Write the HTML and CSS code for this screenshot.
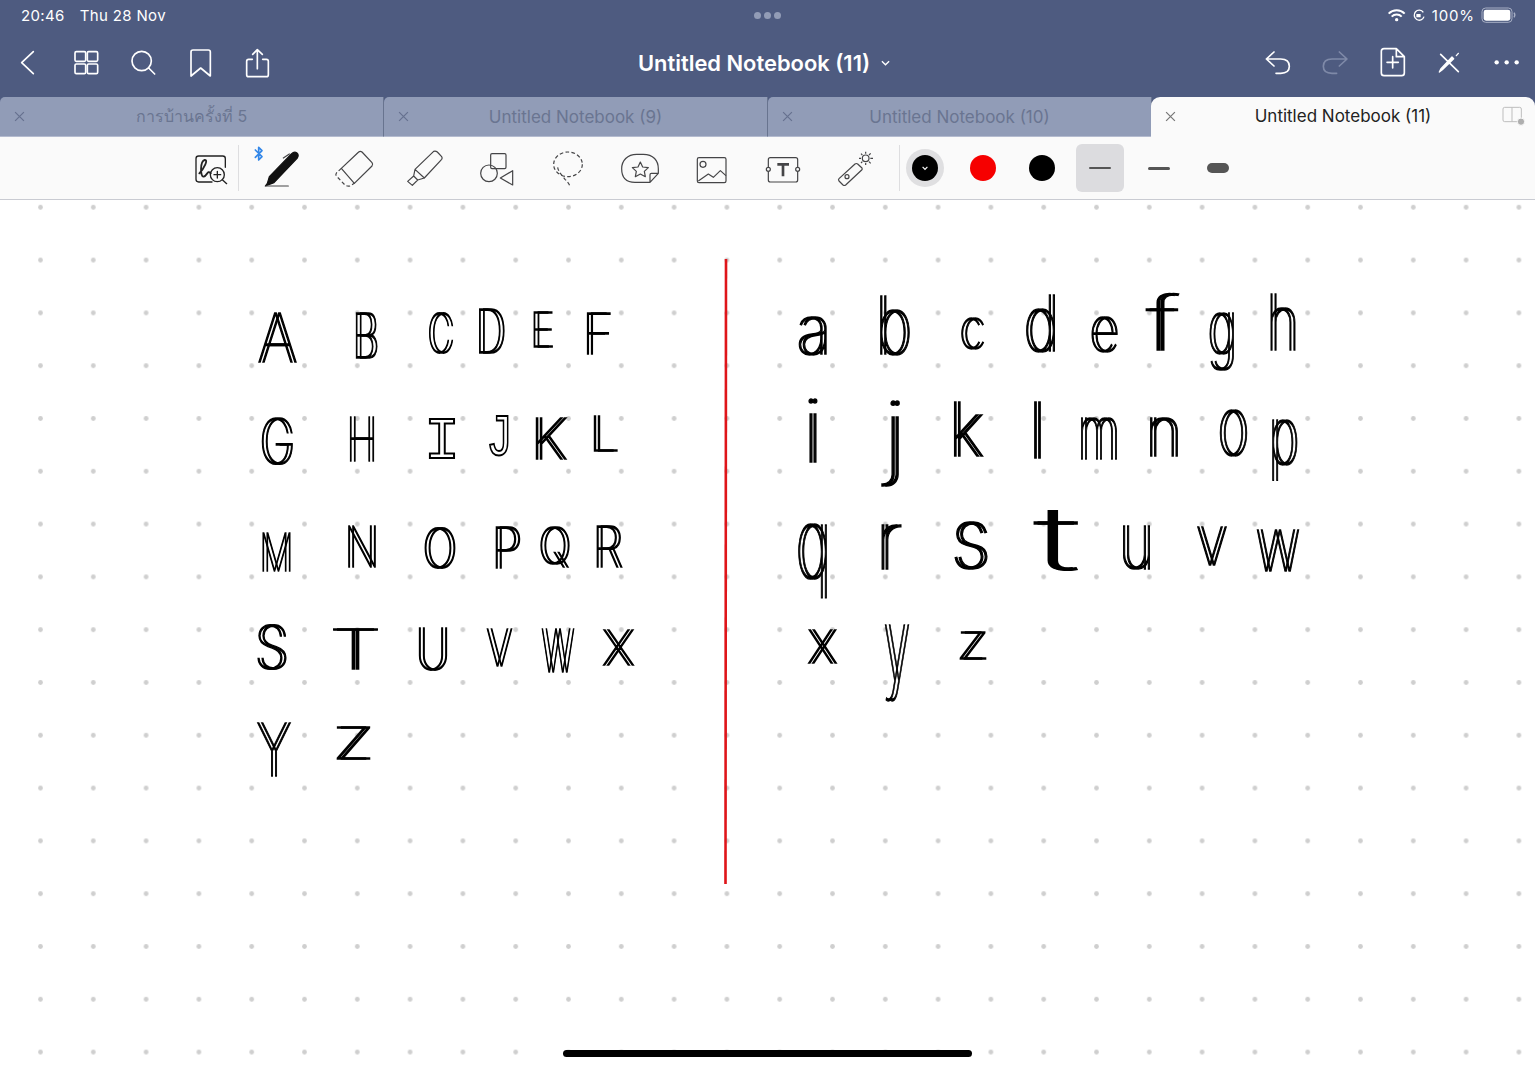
FILE: index.html
```html
<!DOCTYPE html>
<html lang="en">
<head>
  <meta charset="UTF-8">
  <title>Untitled Notebook (11)</title>
  <link rel="stylesheet" href="styles.css">
</head>
<body>
  <div class="app">
    <header class="top">
      <div class="status">
        <div class="status-left"><span>20:46</span><span>Thu 28 Nov</span></div>
        <div class="status-dots"><i></i><i></i><i></i></div>
        <div class="status-right">
          <svg class="st-wifi" viewBox="712 25 54 42"><path d="M717 42a34 34 0 0 1 48 0M726 51a21 21 0 0 1 30 0" /><circle cx="741" cy="60" r="5" /></svg>
          <svg class="st-lock" viewBox="786 25 42 42"><path d="M820 38a15 15 0 1 0 2 13" /><rect x="799" y="43" width="13" height="10" rx="1" /></svg>
          <span class="st-pct">100%</span>
          <svg class="st-batt" viewBox="992 24 108 48"><rect class="batt-shell" x="995" y="27" width="90" height="43" rx="11" /><rect class="batt-fill" x="1000" y="32" width="80" height="33" rx="7" /><path class="batt-nub" d="M1091 41q5 7 0 14" /></svg>
        </div>
      </div>

      <div class="nav">
        <div class="nav-left">
          <svg class="nav-icon" viewBox="36 141 96 96"><path d="M100 155L65 188L100 221" /></svg>
          <svg class="nav-icon" viewBox="210 141 96 96"><rect x="225" y="155" width="32" height="29" rx="4" /><rect x="262" y="155" width="31" height="29" rx="4" /><rect x="225" y="192" width="32" height="29" rx="4" /><rect x="262" y="192" width="31" height="29" rx="4" /></svg>
          <svg class="nav-icon" viewBox="381 141 96 96"><circle cx="425" cy="183" r="29" /><path d="M446 204L464 222" /></svg>
          <svg class="nav-icon" viewBox="555 141 96 96"><path d="M573 156q0-6 6-6h46q6 0 6 6v72l-29-24l-29 24z" /></svg>
          <svg class="nav-icon" viewBox="726 141 96 96"><path d="M757 178h-11q-6 0-6 6v40q0 6 6 6h53q6 0 6-6v-40q0-6-6-6h-11M772 206v-56M758 163l14-14l15 14" /></svg>
        </div>
        <div class="nav-title">
          <span>Untitled Notebook (11)</span>
          <svg class="title-caret" viewBox="0 0 10 6"><path d="M1 1l4 4l4-4" /></svg>
        </div>
        <div class="nav-right">
          <svg class="nav-icon" viewBox="336 141 96 96"><path d="M372 156L349 177L372 198M349 177H392q26 0 26 22q0 21-26 21H378" /></svg>
          <svg class="nav-icon dim" viewBox="507 141 96 96"><path d="M568 156L591 177L568 198M591 177H546q-26 0-26 22q0 21 26 21H560" /></svg>
          <svg class="nav-icon" viewBox="678 141 96 96"><path d="M702 146H739L763 170V219q0 8-8 8H702q-8 0-8-8V154q0-8 8-8zM739 146V170H763M728 170V204M711 187H745" /></svg>
          <svg class="nav-icon" viewBox="849 141 96 96"><path d="M872 163L925 215" /><path class="pen-arm" d="M911 176L877 209L868 216L873 206L906 171ZM919 167L925 160" /></svg>
          <svg class="nav-icon solid" viewBox="1020 141 96 96"><circle cx="1040" cy="187" r="6.5" /><circle cx="1070" cy="187" r="6.5" /><circle cx="1100" cy="187" r="6.5" /></svg>
        </div>
      </div>

      <div class="tabs">
        <div class="tab">
          <svg class="tab-close" viewBox="0 0 10 10"><path d="M1 1l8 8M9 1l-8 8" /></svg>
          <span class="tab-name thai">การบ้านครั้งที่ 5</span>
        </div>
        <div class="tab">
          <svg class="tab-close" viewBox="0 0 10 10"><path d="M1 1l8 8M9 1l-8 8" /></svg>
          <span class="tab-name">Untitled Notebook (9)</span>
        </div>
        <div class="tab">
          <svg class="tab-close" viewBox="0 0 10 10"><path d="M1 1l8 8M9 1l-8 8" /></svg>
          <span class="tab-name">Untitled Notebook (10)</span>
        </div>
        <div class="tab active">
          <svg class="tab-close" viewBox="0 0 10 10"><path d="M1 1l8 8M9 1l-8 8" /></svg>
          <span class="tab-name">Untitled Notebook (11)</span>
          <svg class="tab-split" viewBox="1055 318 72 54"><rect x="1058" y="322" width="55" height="43" rx="5" /><path d="M1085 322V365" /><circle cx="1112" cy="365" r="11" /></svg>
        </div>
      </div>
    </header>

    <div class="tools">
      <svg class="tool dark" viewBox="39 42 108 108"><path d="M96 138H56q-8 0-8-8V68q0-8 8-8H128q8 0 8 8V94M127 131L140 143M112 106V126M102 116H122" /><circle cx="112" cy="116" r="21" /><path class="squiggle" d="M58 112C72 98 86 70 74 72C60 75 60 124 71 122C82 119 82 101 92 112" /></svg>
      <i class="tool-sep"></i>
      <svg class="tool" viewBox="252 42 108 108">
        <path class="bt" d="M226 42L246 62L236 72V34L246 44L226 64" />
        <path class="fill" d="M262 142L256 150L266 146L282 140L352 66Q358 56 350 50Q342 46 334 54L268 122Z" />
        <path d="M258 150H325M310 66L328 54" />
      </svg>
      <svg class="tool" viewBox="468 42 108 108"><path d="M484 97L536 48Q541 44 546 48L576 80Q580 85 576 90L523 142L484 97" /><path class="dash" d="M484 97L470 110Q465 116 470 121L494 146Q500 152 510 150L523 142" /></svg>
      <svg class="tool" viewBox="684 42 108 108"><path d="M708 100L764 46Q770 44 775 48L788 62Q791 66 788 70L736 126ZM708 100L704 120L716 132L736 126M704 120L686 136L700 148L716 132" /></svg>
      <svg class="tool" viewBox="897 42 108 108"><rect x="932" y="53" width="46" height="45" rx="4" /><circle cx="927" cy="112" r="25" /><path d="M998 104V147L961 126Z" /></svg>
      <svg class="tool" viewBox="33 42 108 108"><ellipse class="dash" cx="87" cy="85" rx="43" ry="37" /><path class="dash" d="M56 94C58 108 70 118 78 130C84 136 90 142 92 149" /></svg>
      <svg class="tool" viewBox="246 42 108 108"><path d="M330 139H285C255 139 245 120 245 98C245 74 262 55 290 55H310C340 55 355 74 355 98V112L330 139M355 112H334Q330 112 330 116V139" /><path d="M301 78L308 93L325 95L313 106L316 122L301 114L286 122L289 106L277 95L294 93Z" /></svg>
      <svg class="tool" viewBox="462 42 108 108"><rect x="472" y="65" width="86" height="75" rx="5" /><circle cx="489" cy="85" r="9" /><path d="M476 134L505 114L520 124L541 104L557 118" /></svg>
      <svg class="tool" viewBox="675 42 108 108"><path d="M685 92V71q0-6 6-6H767q6 0 6 6V92M685 108V132q0 6 6 6H767q6 0 6-6V108" /><circle cx="685" cy="100" r="6" /><circle cx="773" cy="100" r="6" /><path class="heavy" d="M712 85H747M729 85V121" /></svg>
      <svg class="tool" viewBox="891 42 108 108"><path d="M953 84L966 96Q968 99 965 102L917 147Q913 150 909 147L897 135Q894 131 897 128L945 84Q949 81 953 84Z" /><circle cx="921" cy="122" r="6" /><circle cx="977" cy="67" r="10" /><path class="dash" d="M977 47V53M977 81V87M957 67H963M991 67H999M963 53L967 57M987 77L992 82M987 57L992 52M963 81L967 77" /></svg>
      <i class="tool-sep last"></i>
      <div class="swatches">
        <div class="swatch-cell"><span class="swatch current"><svg class="swatch-caret" viewBox="0 0 10 6"><path d="M2 1l3 3l3-3" /></svg></span></div>
        <div class="swatch-cell"><span class="swatch red"></span></div>
        <div class="swatch-cell"><span class="swatch"></span></div>
        <div class="swatch-cell picked"><span class="pen-line thin"></span></div>
        <div class="swatch-cell"><span class="pen-line mid"></span></div>
        <div class="swatch-cell"><span class="pen-line thick"></span></div>
      </div>
    </div>

    <main class="canvas">
      <svg class="page" viewBox="0 200 1535 867">
        <defs>
          <pattern id="dots" patternUnits="userSpaceOnUse" x="14.1" y="180.9" width="52.8" height="52.8">
            <circle cx="26.4" cy="26.4" r="2.4" fill="#cfcfcf" />
          </pattern>
        </defs>
        <rect x="0" y="200" width="1535" height="867" fill="url(#dots)" />
        <path class="divider" d="M726 259L725.5 884" />
        <g class="ink">
          <!-- capitals -->
          <text x="257" y="362" font-size="67" textLength="37" lengthAdjust="spacingAndGlyphs">A</text>
          <text x="352" y="358" font-size="62" textLength="24" lengthAdjust="spacingAndGlyphs">B</text>
          <text x="427" y="353" font-size="55" textLength="24" lengthAdjust="spacingAndGlyphs">C</text>
          <text x="475" y="353" font-size="60" textLength="28" lengthAdjust="spacingAndGlyphs">D</text>
          <text x="530" y="347" font-size="48" textLength="21" lengthAdjust="spacingAndGlyphs">E</text>
          <text x="582" y="354" font-size="56" textLength="28" lengthAdjust="spacingAndGlyphs">F</text>
          <text x="259" y="464" font-size="62" textLength="33" lengthAdjust="spacingAndGlyphs">G</text>
          <text x="346" y="461" font-size="60" textLength="28" lengthAdjust="spacingAndGlyphs">H</text>
          <text x="530" y="459" font-size="56" textLength="34" lengthAdjust="spacingAndGlyphs">K</text>
          <text x="589" y="451" font-size="48" textLength="27" lengthAdjust="spacingAndGlyphs">L</text>
          <text x="259" y="571" font-size="52" textLength="31" lengthAdjust="spacingAndGlyphs">M</text>
          <text x="344" y="567" font-size="56" textLength="32" lengthAdjust="spacingAndGlyphs">N</text>
          <text x="422" y="568" font-size="55" textLength="32" lengthAdjust="spacingAndGlyphs">O</text>
          <text x="491" y="568" font-size="56" textLength="28" lengthAdjust="spacingAndGlyphs">P</text>
          <text x="538" y="564" font-size="50" textLength="30" lengthAdjust="spacingAndGlyphs">Q</text>
          <text x="592" y="567" font-size="56" textLength="28" lengthAdjust="spacingAndGlyphs">R</text>
          <text x="254" y="669" font-size="60" textLength="32" lengthAdjust="spacingAndGlyphs">S</text>
          <text x="329" y="669" font-size="54" textLength="49" lengthAdjust="spacingAndGlyphs">T</text>
          <text x="415" y="670" font-size="58" textLength="32" lengthAdjust="spacingAndGlyphs">U</text>
          <text x="486" y="666" font-size="51" textLength="23" lengthAdjust="spacingAndGlyphs">V</text>
          <text x="541" y="672" font-size="59" textLength="30" lengthAdjust="spacingAndGlyphs">W</text>
          <text x="602" y="665" font-size="47" textLength="29" lengthAdjust="spacingAndGlyphs">X</text>
          <text x="256" y="776" font-size="73" textLength="32" lengthAdjust="spacingAndGlyphs">Y</text>
          <text x="333" y="759" font-size="44" textLength="37" lengthAdjust="spacingAndGlyphs">Z</text>
          <!-- small letters -->
          <text x="796" y="354" font-size="68" textLength="32" lengthAdjust="spacingAndGlyphs">a</text>
          <text x="875" y="354" font-size="80" textLength="34" lengthAdjust="spacingAndGlyphs">b</text>
          <text x="959" y="349" font-size="57" textLength="23" lengthAdjust="spacingAndGlyphs">c</text>
          <text x="1023" y="351" font-size="77" textLength="33" lengthAdjust="spacingAndGlyphs">d</text>
          <text x="1089" y="351" font-size="62" textLength="27" lengthAdjust="spacingAndGlyphs">e</text>
          <text x="1146" y="350" font-size="74" textLength="30" lengthAdjust="spacingAndGlyphs">f</text>
          <text x="1207" y="354" font-size="75" textLength="27" lengthAdjust="spacingAndGlyphs">g</text>
          <text x="1266" y="350" font-size="77" textLength="30" lengthAdjust="spacingAndGlyphs">h</text>
          <text x="802" y="462" font-size="87" textLength="18" lengthAdjust="spacingAndGlyphs">i</text>
          <text x="883" y="467" font-size="92" textLength="20" lengthAdjust="spacingAndGlyphs">j</text>
          <text x="948" y="456" font-size="74" textLength="33" lengthAdjust="spacingAndGlyphs">k</text>
          <text x="1028" y="458" font-size="77" textLength="15" lengthAdjust="spacingAndGlyphs">l</text>
          <text x="1077" y="459" font-size="75" textLength="40" lengthAdjust="spacingAndGlyphs">m</text>
          <text x="1145" y="456" font-size="70" textLength="34" lengthAdjust="spacingAndGlyphs">n</text>
          <text x="1217" y="455" font-size="82" textLength="29" lengthAdjust="spacingAndGlyphs">o</text>
          <text x="1268" y="464" font-size="80" textLength="28" lengthAdjust="spacingAndGlyphs">p</text>
          <text x="795" y="578" font-size="97" textLength="33" lengthAdjust="spacingAndGlyphs">q</text>
          <text x="875" y="569" font-size="80" textLength="24" lengthAdjust="spacingAndGlyphs">r</text>
          <text x="950" y="568" font-size="84" textLength="38" lengthAdjust="spacingAndGlyphs">s</text>
          <text x="1034" y="570" font-size="88" textLength="42" lengthAdjust="spacingAndGlyphs">t</text>
          <text x="1118" y="569" font-size="79" textLength="33" lengthAdjust="spacingAndGlyphs">u</text>
          <text x="1195" y="565" font-size="70" textLength="30" lengthAdjust="spacingAndGlyphs">v</text>
          <text x="1255" y="571" font-size="75" textLength="42" lengthAdjust="spacingAndGlyphs">w</text>
          <text x="807" y="663" font-size="60" textLength="27" lengthAdjust="spacingAndGlyphs">x</text>
          <text x="883" y="680" font-size="100" textLength="24" lengthAdjust="spacingAndGlyphs">y</text>
          <text x="956" y="659" font-size="49" textLength="30" lengthAdjust="spacingAndGlyphs">z</text>
        </g>
        <g class="ink-slab">
          <text x="424" y="458" font-size="60" textLength="36" lengthAdjust="spacingAndGlyphs">I</text>
          <text x="486" y="455" font-size="60" textLength="27" lengthAdjust="spacingAndGlyphs">J</text>
        </g>
      </svg>
      <div class="home-bar"></div>
    </main>
  </div>
</body>
</html>
```

FILE: styles.css
```css
* {
  box-sizing: border-box;
}
html, body {
  margin: 0;
  padding: 0;
}
body {
  font-family: Inter, "Noto Sans", "Noto Sans CJK SC", sans-serif;
  background: #fff;
  overflow: hidden;
}
svg {
  display: block;
  overflow: visible;
  flex: none;
}
.app {
  width: 1535px;
  height: 1067px;
  display: flex;
  flex-direction: column;
}
.top {
  background: #4e5b80;
  color: #fff;
}

/* status bar */
.status {
  height: 30px;
  padding: 0 18px 0 21px;
  display: grid;
  grid-template-columns: 1fr auto 1fr;
  align-items: center;
  font-size: 15px;
}
.status-left {
  display: flex;
  gap: 15px;
  letter-spacing: .35px;
}
.status-dots {
  display: flex;
  gap: 3px;
  margin-right: 4px;
}
.status-dots i {
  width: 7px;
  height: 7px;
  border-radius: 50%;
  background: #929cb6;
}
.status-right {
  display: flex;
  align-items: center;
  justify-content: flex-end;
}
.st-wifi {
  width: 18px;
  height: 14px;
  margin-right: 7px;
}
.st-wifi path {
  fill: none;
  stroke: #fff;
  stroke-width: 6;
}
.st-wifi circle {
  fill: #fff;
}
.st-lock {
  width: 14px;
  height: 14px;
  margin-right: 6px;
}
.st-lock path {
  fill: none;
  stroke: #fff;
  stroke-width: 4;
}
.st-lock rect {
  fill: #fff;
}
.st-pct {
  letter-spacing: .9px;
  margin-right: 6px;
}
.st-batt {
  width: 36px;
  height: 16px;
}
.batt-shell {
  fill: none;
  stroke: #a7afc4;
  stroke-width: 3;
}
.batt-fill {
  fill: #fff;
}
.batt-nub {
  fill: none;
  stroke: #a7afc4;
  stroke-width: 4;
}

/* nav */
.nav {
  height: 67px;
  padding: 0 13px 2px 12px;
  display: grid;
  grid-template-columns: 1fr auto 1fr;
  align-items: center;
}
.nav-left, .nav-right {
  display: flex;
  align-items: center;
  gap: 25.5px;
}
.nav-right {
  justify-content: flex-end;
  gap: 25.1px;
}
.nav-icon {
  width: 32px;
  height: 32px;
  fill: none;
  stroke: #fff;
  stroke-width: 5;
  stroke-linecap: round;
  stroke-linejoin: round;
}
.nav-icon.dim {
  stroke: #7f8aa8;
}
.nav-icon.solid {
  fill: #fff;
  stroke: none;
}
.nav-icon .pen-arm {
  fill: #fff;
  stroke-width: 4;
}
.nav-title {
  display: flex;
  align-items: center;
  gap: 11px;
  font-size: 21.9px;
  font-weight: 600;
  padding-right: 6px;
}
.title-caret {
  width: 9px;
  height: 6px;
  fill: none;
  stroke: #fff;
  stroke-width: 1.5;
}

/* tabs */
.tabs {
  height: 40px;
  display: flex;
}
.tab {
  flex: 1;
  display: flex;
  align-items: center;
  position: relative;
  padding: 0 14px;
  background: #919cb7;
  border-top-left-radius: 5px;
  border-bottom: 1px solid #b4bbcf;
  border-right: 1px solid #68748f;
  color: #6a7591;
  font-size: 17px;
}
.tab-close {
  width: 11px;
  height: 11px;
  fill: none;
  stroke: #66718f;
  stroke-width: 1.1;
}
.tab-name {
  flex: 1;
  text-align: center;
  padding-right: 11px;
}
.tab-name.thai {
  font-size: 16px;
}
.tab.active {
  flex: none;
  width: 384px;
  margin-left: -1px;
  background: #fafafa;
  border: 0;
  border-radius: 9px 9px 0 0;
  color: #222;
  font-size: 17px;
  padding-bottom: 2px;
}
.tab.active .tab-close {
  stroke: #777;
}
.tab-split {
  position: absolute;
  right: 9px;
  top: 9px;
  width: 24px;
  height: 18px;
  fill: none;
  stroke: #bdbdbd;
  stroke-width: 3;
}
.tab-split circle {
  fill: #aeaeae;
  stroke: #fafafa;
}

/* tool row */
.tools {
  height: 63px;
  flex: none;
  padding-left: 193px;
  background: #fafafa;
  border-bottom: 1px solid #c9cbd2;
  display: flex;
  align-items: center;
  gap: 35.6px;
}
.tool {
  width: 36px;
  height: 36px;
  fill: none;
  stroke: #454547;
  stroke-width: 3.6;
  stroke-linecap: round;
  stroke-linejoin: round;
}
.tool.dark {
  stroke: #222;
  stroke-width: 4;
}
.tool .squiggle {
  stroke-width: 5.5;
}
.tool .fill {
  fill: #111;
  stroke: #111;
}
.tool .bt {
  stroke: #3387e8;
  stroke-width: 5;
}
.tool .dash {
  stroke-dasharray: 11 7;
  stroke-linecap: butt;
}
.tool .heavy {
  stroke-width: 8;
  stroke-linecap: butt;
}
.tool-sep {
  width: 1px;
  height: 46px;
  background: #dedee0;
  margin: 0 -10.2px 0 -27px;
}
.tool-sep.last {
  margin: 0 -34.6px 0 -9.8px;
}
.swatches {
  display: flex;
  align-items: center;
  gap: 10.6px;
}
.swatch-cell {
  width: 48px;
  height: 48px;
  display: flex;
  align-items: center;
  justify-content: center;
  border-radius: 6px;
}
.swatch-cell.picked {
  background: #dcdcdf;
}
.swatch {
  width: 26px;
  height: 26px;
  border-radius: 50%;
  background: #000;
  display: flex;
  align-items: center;
  justify-content: center;
}
.swatch.red {
  background: #f60000;
}
.swatch.current {
  box-shadow: 0 0 0 6px #dfdfe1;
}
.swatch-caret {
  width: 8px;
  height: 5px;
  fill: none;
  stroke: #fff;
  stroke-width: 1.5;
}
.pen-line {
  width: 22px;
  background: #555;
  border-radius: 5px;
}
.pen-line.thin {
  height: 2px;
}
.pen-line.mid {
  height: 3px;
}
.pen-line.thick {
  height: 10px;
}

/* page */
.canvas {
  flex: 1;
  position: relative;
  background: #fff;
}
.page {
  width: 1535px;
  height: 867px;
}
.divider {
  fill: none;
  stroke: #df151a;
  stroke-width: 2.6;
}
.ink {
  font-family: Inter, sans-serif;
  font-weight: 100;
  fill: #000;
  stroke: #000;
  stroke-width: 1.3;
  filter: drop-shadow(4px 0 0 #000);
}
.ink-slab {
  font-family: "Liberation Mono", monospace;
  fill: none;
  stroke: #000;
  stroke-width: 2;
}
.home-bar {
  position: absolute;
  left: 563px;
  bottom: 10px;
  width: 409px;
  height: 7px;
  border-radius: 4px;
  background: #000;
}
```
